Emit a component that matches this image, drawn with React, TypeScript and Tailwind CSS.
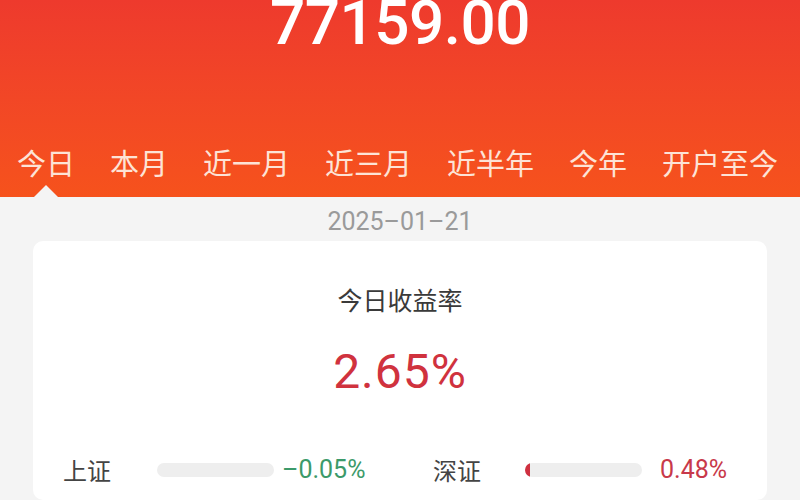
import React from "react";

const tabs = ["今日", "本月", "近一月", "近三月", "近半年", "今年", "开户至今"];
const num = { fontFamily: 'Roboto, "Liberation Sans", sans-serif' };

export default function App() {
  return (
    <div
      className="w-[800px] h-[500px] overflow-hidden bg-[#f4f4f4] flex flex-col"
      style={{ fontFamily: '"Noto Sans CJK SC", "Noto Sans", sans-serif' }}
    >
      <div className="relative h-[197px] shrink-0 bg-gradient-to-b from-[#ee3a2d] to-[#f6521c] flex flex-col items-center">
        <div
          className="mt-[-8px] text-[62px] leading-none text-white font-medium tracking-[-0.5px]"
          style={num}
        >
          77159.00
        </div>
        <div className="absolute left-[17px] top-[142px] flex gap-[35px] text-[29px] leading-[40px] text-[#fde3d6]">
          {tabs.map((t) => (
            <span key={t}>{t}</span>
          ))}
        </div>
        <div className="absolute left-[34px] bottom-0 w-0 h-0 border-l-[12px] border-r-[12px] border-b-[12px] border-l-transparent border-r-transparent border-b-[#f4f4f4]" />
      </div>
      <div className="mt-[9px] text-center text-[25px] leading-[32px] text-[#9a9a9a]" style={num}>
        2025–01–21
      </div>
      <div className="mx-[33px] mt-[3px] bg-white rounded-[10px] flex-1 flex flex-col items-center">
        <div className="mt-[41px] text-[25px] leading-[34px] text-[#3a3a3a]">今日收益率</div>
        <div className="mt-[28px] text-[48px] leading-[56px] text-[#d0323e] tracking-[1px]" style={num}>
          2.65%
        </div>
        <div className="mt-[53px] w-full flex items-center pl-[30px] text-[24px] leading-[34px]">
          <span className="text-[#444] w-[94px]">上证</span>
          <div className="w-[117px] h-[14px] rounded-full bg-[#eeeeee]" />
          <span className="ml-[8px] w-[151px] text-[#3c9a6a] text-[25px]" style={num}>
            –0.05%
          </span>
          <span className="text-[#444] w-[92px]">深证</span>
          <div className="w-[117px] h-[14px] rounded-full bg-[#eeeeee] overflow-hidden flex">
            <div className="w-[5px] h-full bg-[#cf3040] rounded-l-full" />
          </div>
          <span className="ml-[18px] text-[#c8394a] text-[25px]" style={num}>
            0.48%
          </span>
        </div>
      </div>
    </div>
  );
}
